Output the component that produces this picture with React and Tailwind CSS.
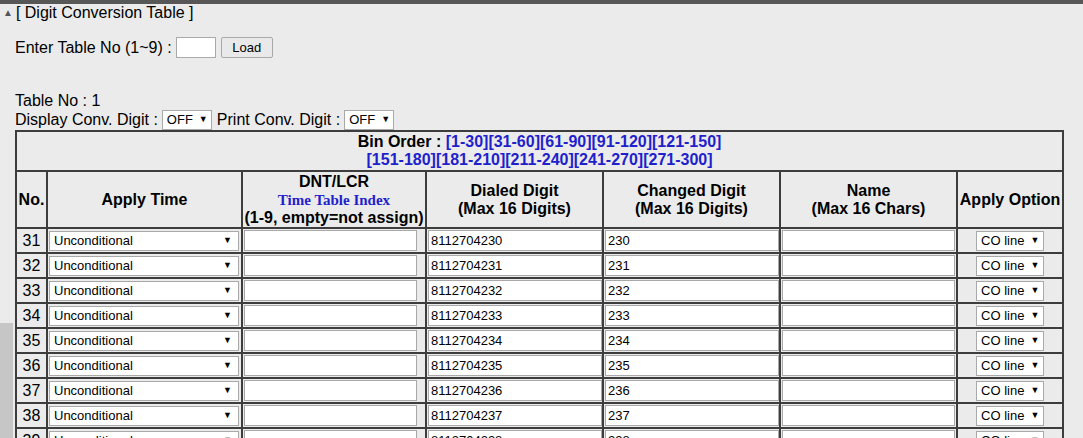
const ROWS = [31, 32, 33, 34, 35, 36, 37, 38, 39]

const BINS_1 = ['[1-30]', '[31-60]', '[61-90]', '[91-120]', '[121-150]']
const BINS_2 = ['[151-180]', '[181-210]', '[211-240]', '[241-270]', '[271-300]']

function FakeSelect({ value, className = '' }) {
  return (
    <div className={`flex h-[20px] items-center justify-between whitespace-nowrap border border-[#a9a9a9] bg-white pl-[4px] pr-[6px] text-[13px] leading-none text-black ${className}`}>
      <span>{value}</span>
      <span className="ml-[6px] text-[9px]">▼</span>
    </div>
  )
}

function TextBox({ value = '', className = '' }) {
  return (
    <div className={`flex h-[21px] items-center border border-[#a9a9a9] bg-white px-[2px] text-[13px] leading-none text-black ${className}`}>
      {value}
    </div>
  )
}

const th = 'border-2 border-[#3d3d3d] p-0 text-center align-middle font-bold leading-[18px]'
const td = 'border-2 border-[#3d3d3d] h-[25px] p-0 align-middle leading-none'

export default function App() {
  return (
    <div className="relative h-[438px] w-[1083px] overflow-hidden bg-[#ebebeb] text-[16px] text-black" style={{ fontFamily: '"Liberation Sans", Arial, sans-serif' }}>
      <div className="h-[4px] bg-[#575757]" />
      <div className="flex">
        <div className="flex w-[13px] shrink-0 flex-col">
          <div className="h-[319px]" />
          <div className="h-[200px] bg-[#c6c6c6]" />
        </div>
        <div className="flex-1">
          <div className="-ml-[10px] flex h-[18px] items-center gap-[3px] leading-none">
            <span className="text-[10px] text-[#555]">▲</span>
            <span>[ Digit Conversion Table ]</span>
          </div>
          <div className="ml-[2px] mt-[15px] flex items-center leading-none">
            <span>Enter Table No (1~9) :</span>
            <div className="ml-[4px] h-[21px] w-[40px] border border-[#a9a9a9] bg-white" />
            <div className="ml-[5px] flex h-[21px] w-[52px] items-center justify-center rounded-[2px] border border-[#a9a9a9] bg-[#e9e9e9] text-[13px]">Load</div>
          </div>
          <div className="ml-[2px] mt-[34px] leading-[18px]">Table No : 1</div>
          <div className="ml-[2px] flex h-[19px] items-center leading-none">
            <span>Display Conv. Digit :</span>
            <FakeSelect value="OFF" className="ml-[4px] h-[18px] w-[50px]" />
            <span className="ml-[5px]">Print Conv. Digit :</span>
            <FakeSelect value="OFF" className="ml-[4px] h-[18px] w-[50px]" />
          </div>

          <table className="ml-[2px] mt-[1px] table-fixed border-collapse" style={{ width: 1047 }}>
            <colgroup>
              <col className="w-[31px]" />
              <col className="w-[195px]" />
              <col className="w-[184px]" />
              <col className="w-[177px]" />
              <col className="w-[177px]" />
              <col className="w-[177px]" />
              <col className="w-[106px]" />
            </colgroup>
            <thead>
              <tr>
                <th colSpan={7} className={`${th} h-[40px]`}>
                  <div>
                    Bin Order :{' '}
                    {BINS_1.map((b) => (
                      <span key={b} className="text-[#1f1fcc]">{b}</span>
                    ))}
                  </div>
                  <div>
                    {BINS_2.map((b) => (
                      <span key={b} className="text-[#1f1fcc]">{b}</span>
                    ))}
                  </div>
                </th>
              </tr>
              <tr>
                <th className={`${th} h-[57px]`}>No.</th>
                <th className={th}>Apply Time</th>
                <th className={th}>
                  <div>DNT/LCR</div>
                  <div className="text-[15px] text-[#1f1fcc]" style={{ fontFamily: '"Liberation Serif", "Times New Roman", serif' }}>Time Table Index</div>
                  <div className="whitespace-nowrap">(1-9, empty=not assign)</div>
                </th>
                <th className={th}>
                  <div>Dialed Digit</div>
                  <div>(Max 16 Digits)</div>
                </th>
                <th className={th}>
                  <div>Changed Digit</div>
                  <div>(Max 16 Digits)</div>
                </th>
                <th className={th}>
                  <div>Name</div>
                  <div>(Max 16 Chars)</div>
                </th>
                <th className={`${th} whitespace-nowrap`}>Apply Option</th>
              </tr>
            </thead>
            <tbody>
              {ROWS.map((n) => (
                <tr key={n}>
                  <td className={`${td} text-center`}>{n}</td>
                  <td className={`${td} pl-[1px]`}>
                    <FakeSelect value="Unconditional" className="w-[190px]" />
                  </td>
                  <td className={`${td} pl-[1px]`}>
                    <TextBox className="w-[173px]" />
                  </td>
                  <td className={`${td} pl-[1px]`}>
                    <TextBox value={`81127042${n - 1}`} className="w-[174px]" />
                  </td>
                  <td className={`${td} pl-[1px]`}>
                    <TextBox value={`2${n - 1}`} className="w-[174px]" />
                  </td>
                  <td className={`${td} pl-[1px]`}>
                    <TextBox className="w-[173px]" />
                  </td>
                  <td className={td}>
                    <FakeSelect value="CO line" className="mx-auto w-[68px]" />
                  </td>
                </tr>
              ))}
            </tbody>
          </table>
        </div>
      </div>
    </div>
  )
}
